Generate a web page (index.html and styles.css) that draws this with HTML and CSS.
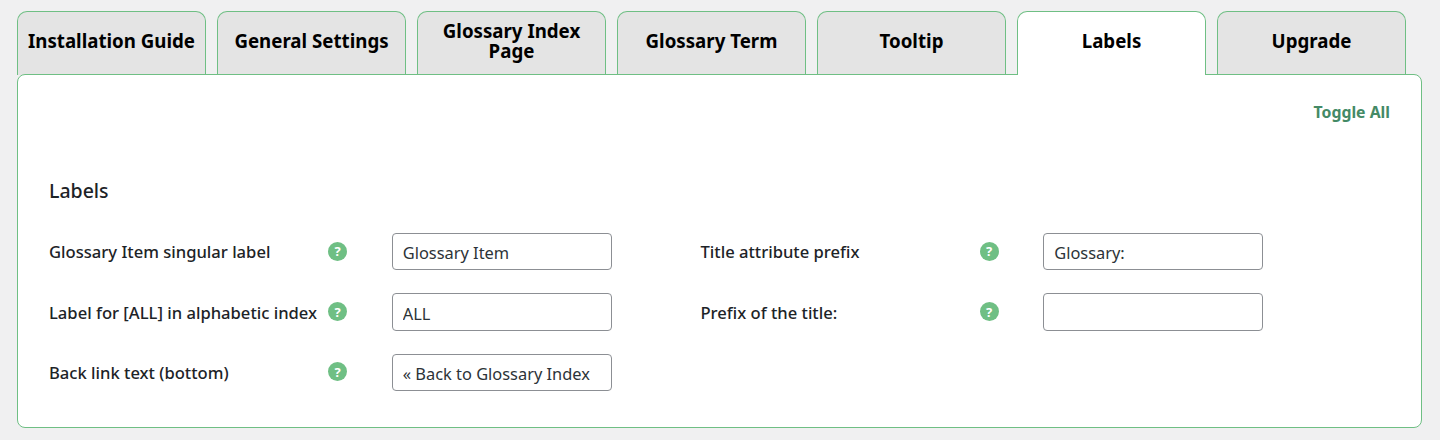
FILE: index.html
```html
<!DOCTYPE html>
<html lang="en">
<head>
    <meta charset="UTF-8">
    <meta name="viewport" content="width=device-width, initial-scale=1.0">
    <title>Glossary Settings - Labels</title>
    <link rel="stylesheet" href="styles.css">
</head>
<body>
    <div class="tabs">
        <a class="tab">Installation Guide</a>
        <a class="tab">General Settings</a>
        <a class="tab">Glossary Index Page</a>
        <a class="tab">Glossary Term</a>
        <a class="tab">Tooltip</a>
        <a class="tab active">Labels</a>
        <a class="tab">Upgrade</a>
    </div>

    <div class="panel">
        <div class="toggle-row">
            <a class="toggle-all">Toggle All</a>
        </div>

        <h3 class="section-title">Labels</h3>

        <div class="fields">
            <div class="field">
                <label class="field-label">Glossary Item singular label</label>
                <span class="help">?</span>
                <input class="field-input" type="text" value="Glossary Item">
            </div>
            <div class="field">
                <label class="field-label">Title attribute prefix</label>
                <span class="help">?</span>
                <input class="field-input" type="text" value="Glossary:">
            </div>
            <div class="field">
                <label class="field-label">Label for [ALL] in alphabetic index</label>
                <span class="help">?</span>
                <input class="field-input" type="text" value="ALL">
            </div>
            <div class="field">
                <label class="field-label">Prefix of the title:</label>
                <span class="help">?</span>
                <input class="field-input" type="text" value="">
            </div>
            <div class="field">
                <label class="field-label">Back link text (bottom)</label>
                <span class="help">?</span>
                <input class="field-input" type="text" value="« Back to Glossary Index">
            </div>
        </div>
    </div>
</body>
</html>
```

FILE: styles.css
```css
* {
    margin: 0;
    padding: 0;
    box-sizing: border-box;
}

body {
    font-family: "Noto Sans", "Open Sans", sans-serif;
    background: #f0f0f1;
    color: #1d2327;
    padding: 11px 18px 0 17px;
}

.tabs {
    display: flex;
    gap: 11px;
    margin-bottom: -1px;
}

.tab {
    width: 189px;
    height: 64px;
    display: flex;
    align-items: center;
    justify-content: center;
    text-align: center;
    padding: 0 5px 6px;
    background: #e4e4e4;
    border: 1px solid #6fbf84;
    border-bottom: none;
    border-radius: 10px 10px 0 0;
    color: #000;
    font-size: 18.7px;
    font-weight: 700;
    line-height: 20px;
}

/* active tab sits on top of the panel border */
.tab.active {
    background: #fff;
    position: relative;
    z-index: 2;
}

.panel {
    position: relative;
    z-index: 1;
    height: 354px;
    background: #fff;
    border: 1px solid #6fbf84;
    border-radius: 8px;
    padding: 27px 31px 0;
}

.toggle-row {
    display: flex;
    justify-content: flex-end;
}

.toggle-all {
    font-size: 15.8px;
    font-weight: 700;
    line-height: 20px;
    color: #448a66;
}

.section-title {
    margin-top: 56px;
    font-size: 19.5px;
    font-weight: 500;
    line-height: 26px;
}

.fields {
    display: grid;
    grid-template-columns: 651.5px 1fr;
    row-gap: 22.8px;
    margin-top: 28.9px;
}

.field {
    display: flex;
    align-items: center;
    height: 37.6px;
}

.field-label {
    width: 279px;
    font-size: 16.6px;
    font-weight: 500;
    white-space: nowrap;
}

.help {
    width: 19px;
    height: 19px;
    flex: none;
    margin-right: 44.75px;
    margin-top: -1px;
    display: flex;
    align-items: center;
    justify-content: center;
    border-radius: 50%;
    background: #6fbf84;
    color: #fff;
    font-size: 13px;
    font-weight: 700;
}

.field-input {
    width: 220px;
    height: 37.6px;
    padding: 2px 10px 0;
    border: 1px solid #8c8f94;
    border-radius: 4px;
    background: #fff;
    color: #2c3338;
    font-family: inherit;
    font-size: 16.4px;
}
```
